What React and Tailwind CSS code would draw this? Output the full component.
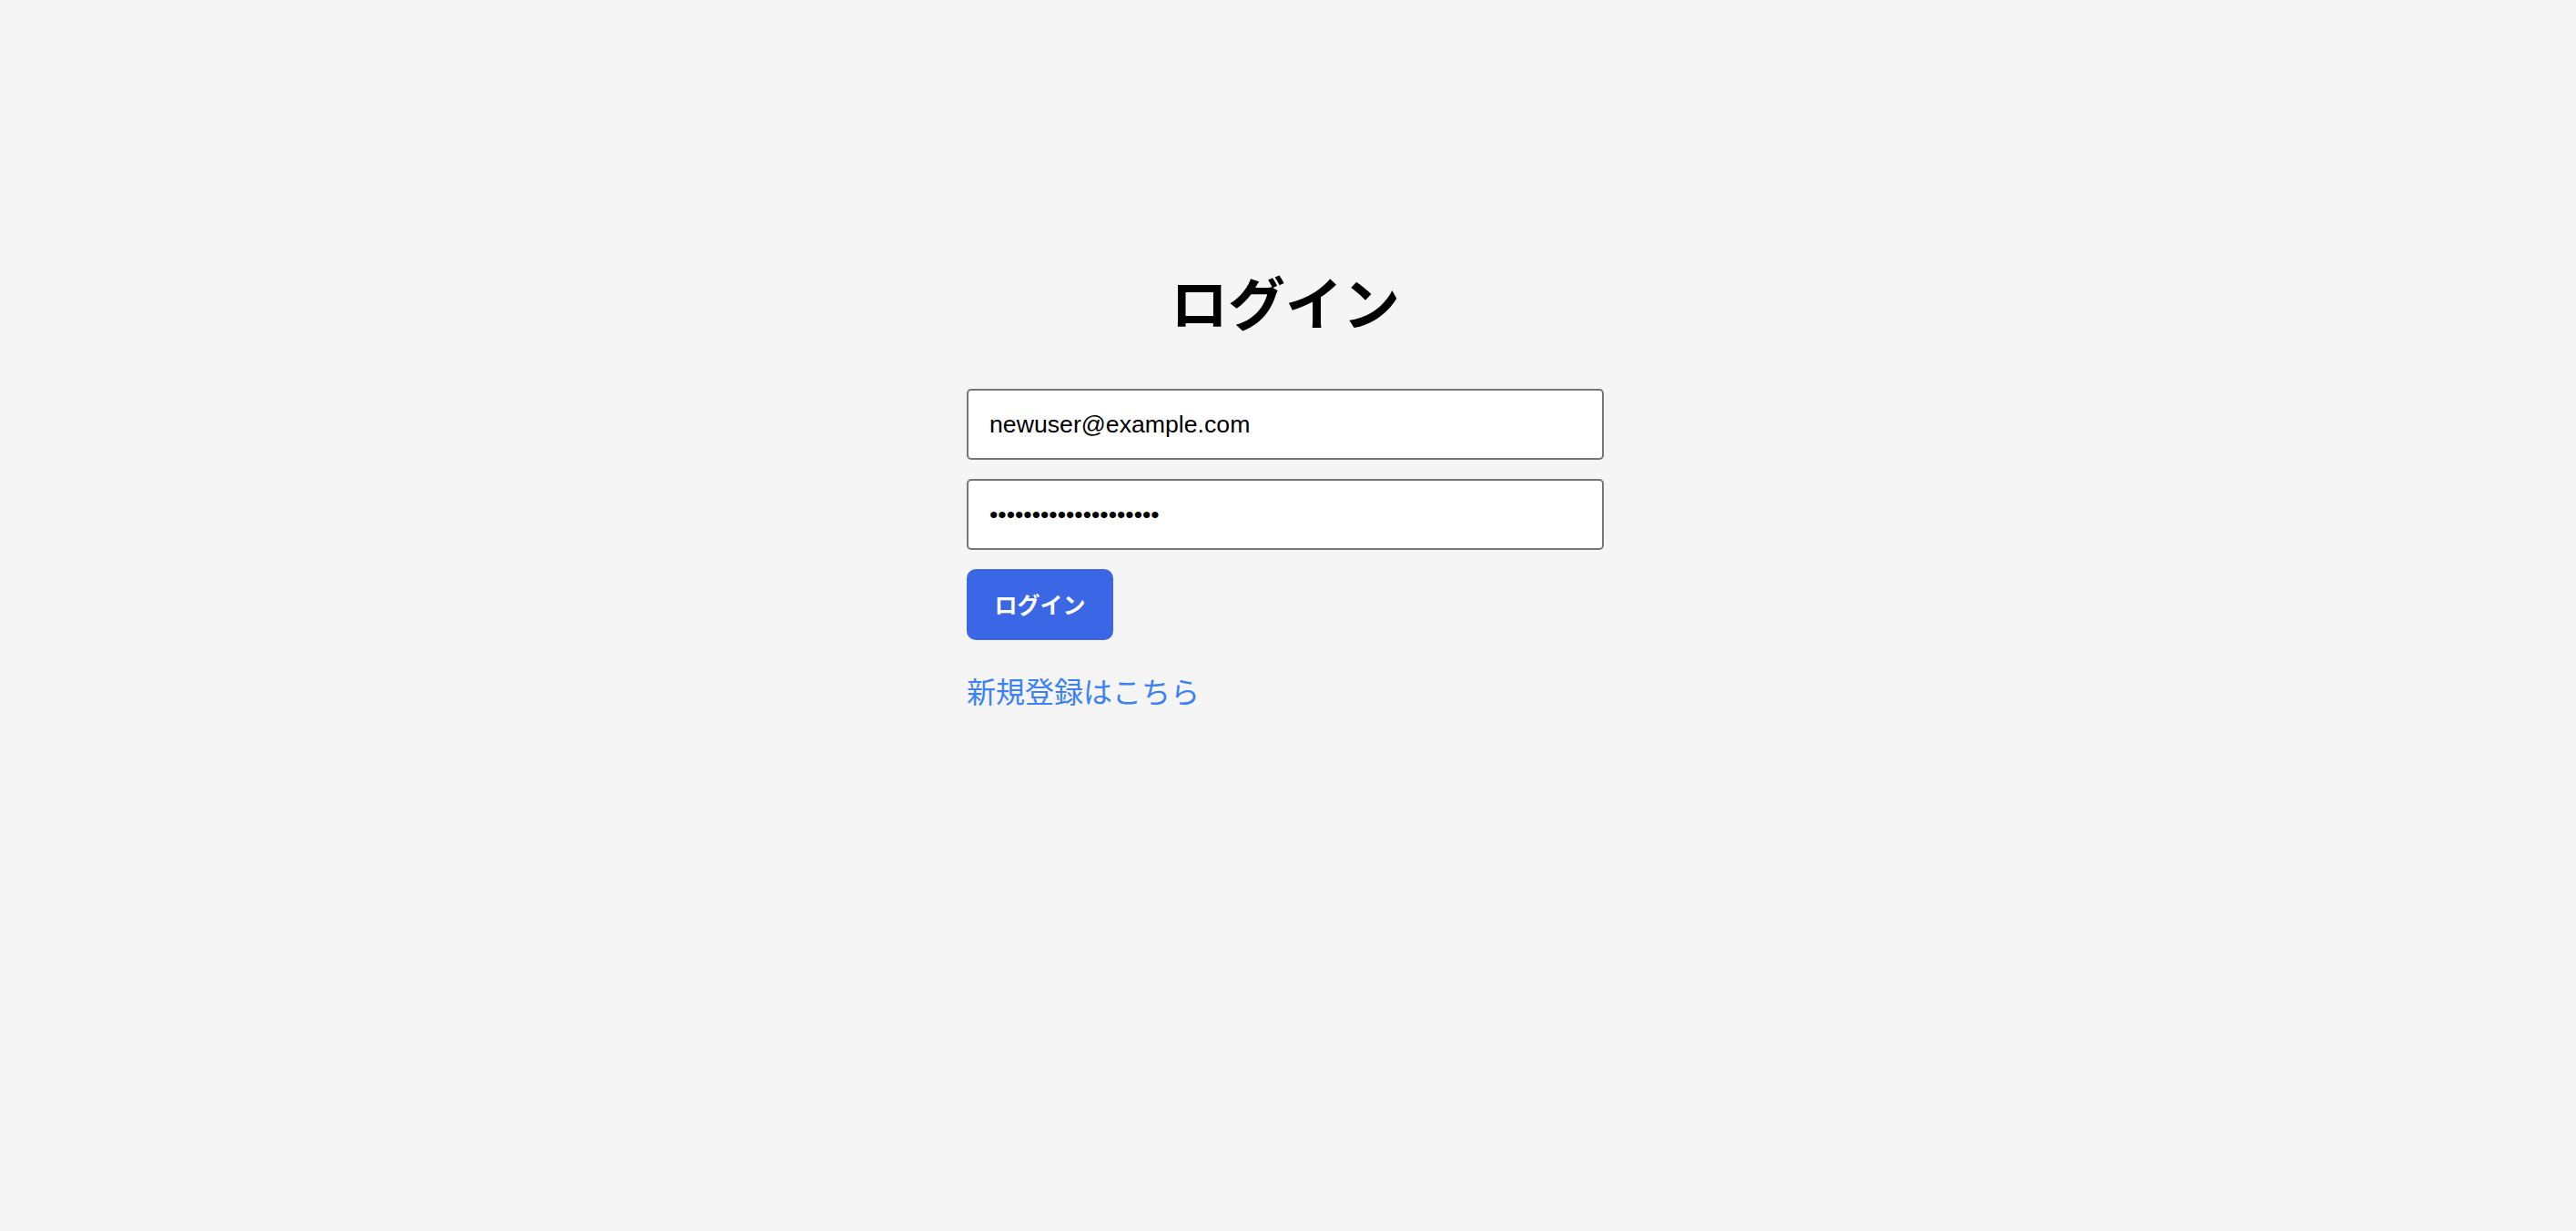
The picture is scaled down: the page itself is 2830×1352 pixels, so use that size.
import { useState } from 'react'

const CJK = { fontFamily: '"Noto Sans CJK JP", "Noto Sans", sans-serif' }

export default function App() {
  const [email, setEmail] = useState('newuser@example.com')
  const [password, setPassword] = useState('passwordpassword1234')

  return (
    <div className="min-h-screen w-full bg-[#f5f5f5]" style={CJK}>
      <div className="ml-[calc(50%-353px)] w-[700px] pt-[286px]">
        <h1 className="text-center text-[63px] font-bold leading-[88px] text-black">ログイン</h1>

        <form
          className="mt-[53px] flex flex-col items-start gap-[21px]"
          onSubmit={(e) => e.preventDefault()}
        >
          <input
            type="email"
            value={email}
            onChange={(e) => setEmail(e.target.value)}
            className="h-[78px] w-full rounded-[5px] border-2 border-[#767676] bg-white px-[23px] text-[26.67px] text-black outline-none"
            style={{ fontFamily: '"Liberation Sans", Arial, sans-serif' }}
          />
          <input
            type="password"
            value={password}
            onChange={(e) => setPassword(e.target.value)}
            className="h-[78px] w-full rounded-[5px] border-2 border-[#767676] bg-white px-[23px] text-[26.67px] text-black outline-none"
            style={{ fontFamily: '"Liberation Sans", Arial, sans-serif' }}
          />
          <button
            type="submit"
            className="flex h-[78px] w-[161px] items-center justify-center rounded-[10px] border-0 bg-[#3b66e5] text-[25px] font-bold text-white"
          >
            ログイン
          </button>
        </form>

        <a href="#" className="mt-[33px] block text-[32px] leading-[44px] text-[#3b82f6]">
          新規登録はこちら
        </a>
      </div>
    </div>
  )
}
